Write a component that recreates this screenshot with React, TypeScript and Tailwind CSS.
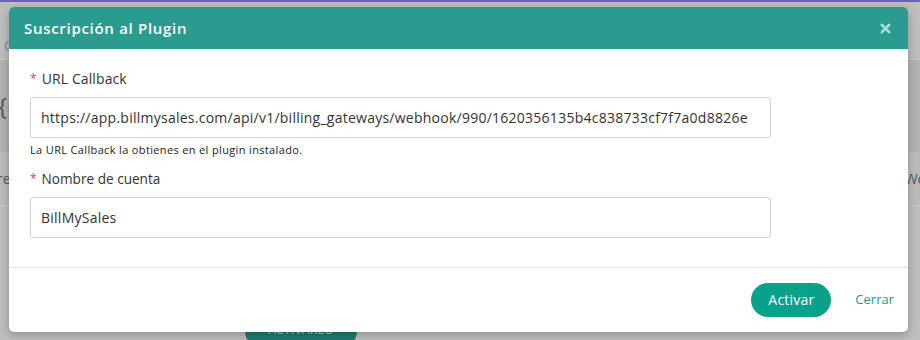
import { X } from 'lucide-react'

const font = { fontFamily: '"Open Sans", "Noto Sans", sans-serif' }

export default function App() {
  return (
    <div className="relative w-[920px] h-[340px] overflow-hidden bg-[#bdbdbd]" style={font}>
      {/* page behind the overlay */}
      <div className="flex flex-col h-full">
        <div className="h-[2px] bg-[#6a5fc6]" />
        <div className="h-[58px] border-b border-[#c8c8c8] bg-[#bebebe] flex items-center pl-1 pt-[30px] text-[#8a8a8a] text-sm">
          C
        </div>
        <div className="h-[92px] bg-[#b3b3b3] flex items-center text-2xl text-[#555]">
          <span className="-ml-[2px]">{'{r'}</span>
        </div>
        <div className="h-[54px] border-b border-[#cacaca] bg-[#bcbcbc] flex items-center justify-between text-sm text-[#555]">
          <span className="-ml-[3px]">re</span>
          <span className="-mr-[6px]">Wo</span>
        </div>
        <div className="flex-1 bg-[#bebebe] relative">
          <div className="absolute left-[245px] top-[108px] w-[112px] h-[34px] rounded-full bg-[#1d7c6f] text-[#9fc9c2] text-xs text-center pt-[8px] tracking-wide">
            ACTIVARLO
          </div>
        </div>
      </div>

      {/* modal */}
      <div className="absolute left-[9px] top-[7px] w-[899px] rounded-[5px] bg-white shadow-[0_3px_10px_rgba(0,0,0,0.25)] overflow-hidden">
        <div className="h-[42px] bg-[#2b9b8f] flex items-center justify-between pl-[15px] pr-[15px]">
          <h2 className="text-white text-[15px] font-semibold tracking-[0.7px]">Suscripción al Plugin</h2>
          <X size={15} strokeWidth={4} className="text-[#a8dcd5]" />
        </div>
        <div className="pl-[21px] pt-[20px] pb-[29px] border-b border-[#e3e3e3]">
          <label className="flex items-center h-[20px] text-sm text-[#333] tracking-[0.1px]">
            <span className="text-[#d63a6a] text-xs mr-[5px]">*</span>URL Callback
          </label>
          <div className="mt-[8px] w-[741px] h-[41px] border border-[#d0d0d0] rounded-[3px] flex items-center pl-[10px] text-[14px] tracking-[0.25px] text-[#333] whitespace-nowrap overflow-hidden">
            https://app.billmysales.com/api/v1/billing_gateways/webhook/990/1620356135b4c838733cf7f7a0d8826e
          </div>
          <p className="mt-[4px] text-[11px] leading-[15px] font-medium tracking-[0.35px] text-[#222]">La URL Callback la obtienes en el plugin instalado.</p>
          <label className="mt-[12px] flex items-center h-[20px] text-[13.6px] text-[#333]">
            <span className="text-[#d63a6a] text-xs mr-[5px]">*</span>Nombre de cuenta
          </label>
          <div className="mt-[8px] w-[741px] h-[41px] border border-[#d0d0d0] rounded-[3px] flex items-center pl-[10px] text-[14px] tracking-[0.25px] text-[#333]">
            BillMySales
          </div>
        </div>
        <div className="flex items-center justify-end gap-[24px] pr-[14px] pt-[15px] pb-[15px]">
          <button className="h-[34px] w-[80px] rounded-full bg-[#08a28b] text-white text-sm tracking-[0.2px]">Activar</button>
          <button className="text-[#1f9a8a] text-[13px]">Cerrar</button>
        </div>
      </div>
    </div>
  )
}
